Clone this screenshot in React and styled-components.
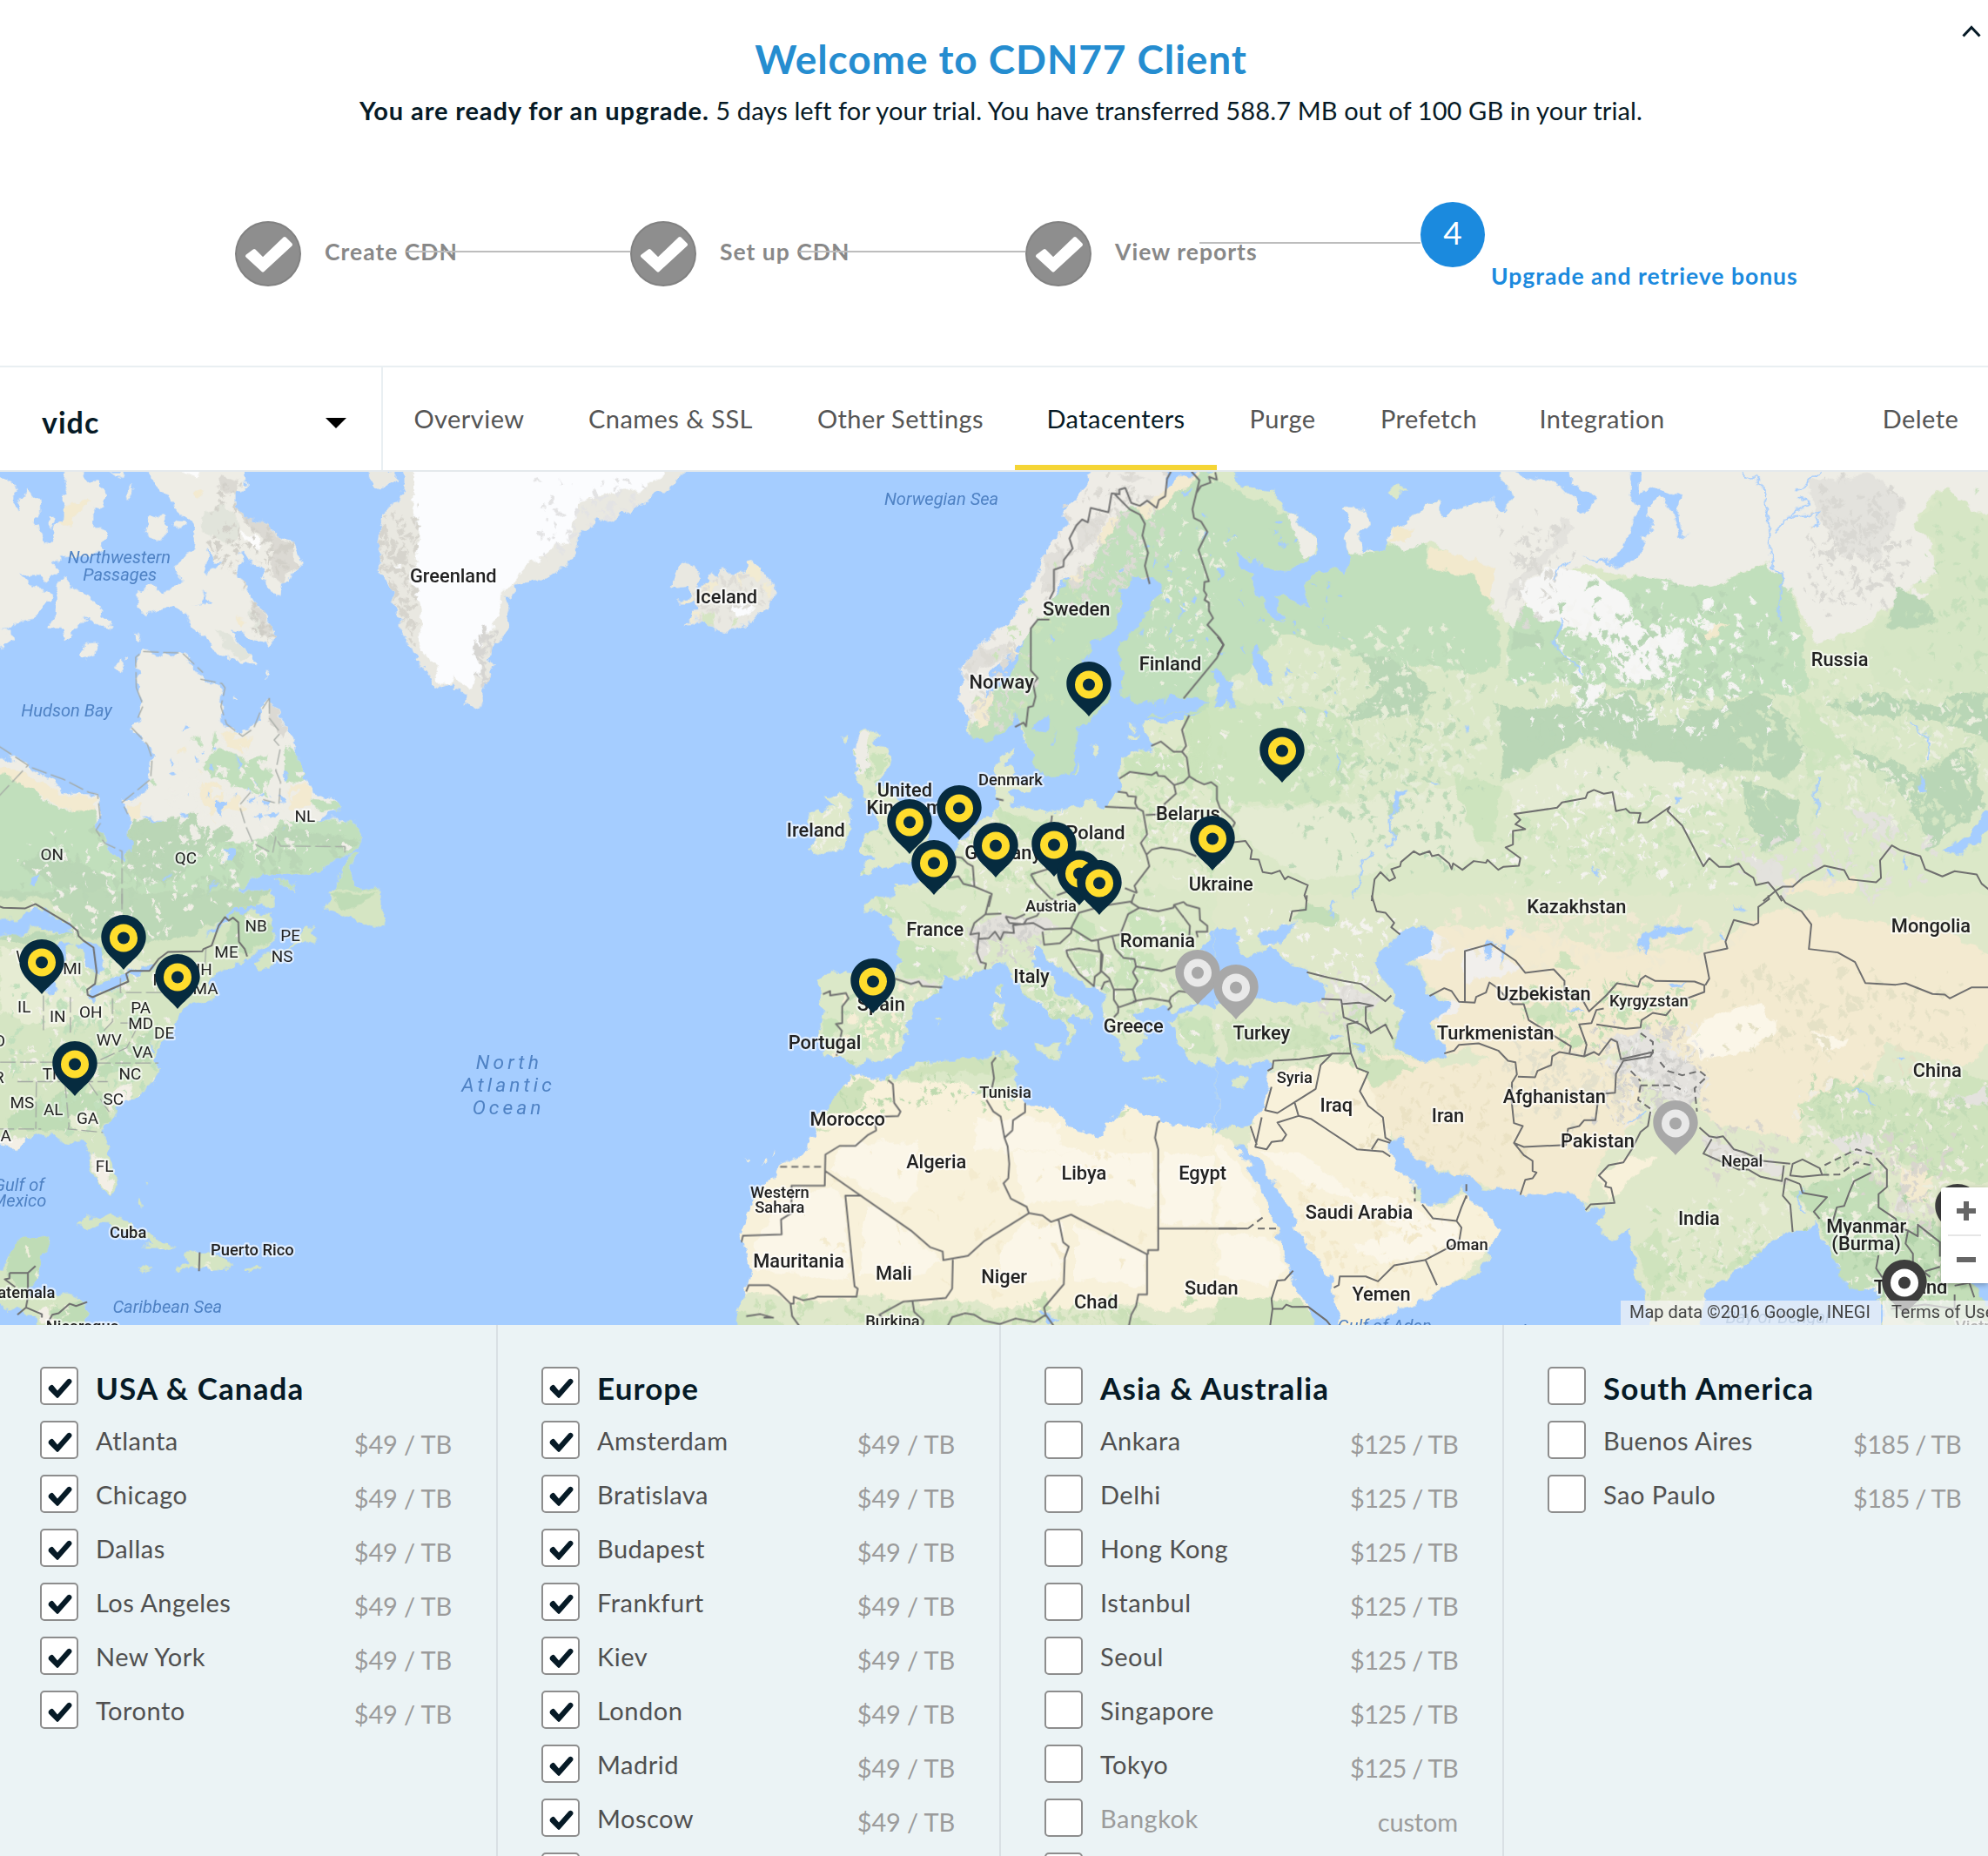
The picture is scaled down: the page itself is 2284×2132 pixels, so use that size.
import React from "react";
import styled, { createGlobalStyle, css } from "styled-components";

const Global = createGlobalStyle`
  * { box-sizing: border-box; }
  html, body { margin: 0; padding: 0; background: #fff; overflow: hidden; }
`;

const Page = styled.div`
  width: 2284px;
  height: 2132px;
  overflow: hidden;
  display: flex;
  flex-direction: column;
  background: #fff;
  color: #061a26;
  font-family: Lato, "Open Sans", sans-serif;
`;

/* ---------- welcome panel ---------- */
const Welcome = styled.header`
  position: relative;
  height: 420px;
  flex: none;
  padding: 39px 0 0 16px;
`;
const Title = styled.h1`
  margin: 0;
  height: 58px;
  line-height: 58px;
  text-align: center;
  font-size: 46px;
  font-weight: 700;
  letter-spacing: 0.9px;
  color: #258dd0;
`;
const Lead = styled.p`
  margin: 9px 0 0;
  height: 42px;
  line-height: 42px;
  text-align: center;
  font-size: 29px;
  white-space: nowrap;
  letter-spacing: 0.13px;
  b { letter-spacing: 0.88px; }
`;
const Collapse = styled.svg`
  position: absolute;
  right: 8px;
  top: 28px;
`;
const Steps = styled.ol`
  list-style: none;
  margin: 84px 0 0;
  padding: 0 0 0 254px;
  display: flex;
`;
const Step = styled.li`
  position: relative;
  width: 454px;
  height: 120px;
  display: flex;
  align-items: flex-start;
  gap: ${(p) => (p.$active ? 7 : 27)}px;
  font-size: 26.5px;
  font-weight: 700;
  letter-spacing: 1px;
  white-space: nowrap;
  color: ${(p) => (p.$active ? "#1b8ade" : "#888")};
`;
const StepDisc = styled.span`
  flex: none;
  width: ${(p) => (p.$active ? 74 : 76)}px;
  height: 75px;
  margin-top: ${(p) => (p.$active ? 0 : 22)}px;
  border-radius: 50%;
  display: flex;
  align-items: center;
  justify-content: center;
  padding-bottom: ${(p) => (p.$active ? 6 : 0)}px;
  font-size: 37px;
  font-weight: 400;
  letter-spacing: 0;
  color: #fff;
  background: ${(p) => (p.$active ? "#1b8ade" : "#8e8e8e")};
  border: ${(p) => (p.$active ? "0" : "2px solid #828282")};
`;
const StepText = styled.span`
  line-height: 32px;
  margin-top: ${(p) => (p.$active ? 69 : 41)}px;
`;
const StepLine = styled.span`
  position: absolute;
  left: ${(p) => p.$from}px;
  right: 0;
  top: ${(p) => p.$top}px;
  height: 2px;
  background: #bdbdbd;
`;

/* ---------- resource bar ---------- */
const Bar = styled.nav`
  flex: none;
  height: 122px;
  display: flex;
  border-top: 2px solid #e9eff2;
  border-bottom: 2px solid #e4e9ec;
`;
const Picker = styled.div`
  width: 440px;
  border-right: 2px solid #e9eff2;
  padding: 6px 40px 0 48px;
  display: flex;
  align-items: center;
  justify-content: space-between;
  font-size: 34px;
  font-weight: 700;
  letter-spacing: 1px;
`;
const Caret = styled.i`
  margin-top: 4px;
  border: 12px solid transparent;
  border-top-color: #000;
  border-bottom: 0;
`;
const Tab = styled.a`
  width: ${(p) => p.$w}px;
  display: flex;
  align-items: center;
  justify-content: center;
  padding-top: 5px;
  font-size: 29px;
  letter-spacing: 0.45px;
  white-space: nowrap;
  color: ${(p) => (p.$active ? "#061a26" : "#555")};
  border-bottom: 6px solid ${(p) => (p.$active ? "#f5d535" : "transparent")};
  ${(p) => p.$end && css`margin-left: auto; margin-right: 35px;`}
`;

/* ---------- map ---------- */
const MapPanel = styled.section`
  position: relative;
  flex: none;
  height: 980px;
  overflow: hidden;
  background: #a5cdff;
`;
const MapSvg = styled.svg`
  display: block;
  width: 2284px;
  height: 980px;
`;
const MapText = styled.text`
  font-family: Roboto, sans-serif;
  text-anchor: middle;
  paint-order: stroke;
  stroke-linejoin: round;
  ${(p) => p.$kind === "country" && css`font-size: 15px; font-weight: 500;`}
  ${(p) => p.$kind === "small" && css`font-size: 12.6px; font-weight: 500;`}
  ${(p) => p.$kind === "state" && css`font-size: 13px; font-weight: 400;`}
  fill: #222;
  stroke: rgba(255, 255, 255, 0.6);
  stroke-width: 3px;
  ${(p) => p.$kind === "water" && css`font-size: 13.8px; font-style: italic; fill: #4f82c4; stroke: none;`}
  ${(p) => p.$kind === "ocean" && css`font-size: 15.6px; font-style: italic; fill: #4f82c4; stroke: none; letter-spacing: 2.8px;`}
`;
const PinSvg = styled.svg`
  position: absolute;
  left: ${(p) => p.$x - 27}px;
  top: ${(p) => p.$y - 542 - 64}px;
`;
const Zoom = styled.div`
  position: absolute;
  right: 0;
  top: 822px;
  width: 54px;
  height: 110px;
  padding: 0 8px;
  border-radius: 3px 0 0 3px;
  background: #fff;
  box-shadow: 0 2px 6px rgba(0, 0, 0, 0.3);
  display: flex;
  flex-direction: column;
`;
const ZoomButton = styled.div`
  flex: 1;
  display: flex;
  align-items: center;
  justify-content: center;
  padding-left: 3px;
  & + & { border-top: 2px solid #e6e6e6; }
`;
const Credits = styled.div`
  position: absolute;
  left: 1862px;
  right: 0;
  bottom: 0;
  height: 28px;
  display: flex;
  gap: 2px;
  overflow: hidden;
  font: 20px/26px Roboto, sans-serif;
  color: #444;
  white-space: nowrap;
`;
const Credit = styled.span`
  padding: 0 ${(p) => (p.$last ? 0 : 12)}px 0 10px;
  flex: ${(p) => (p.$last ? "1 0 auto" : "none")};
  background: rgba(245, 245, 245, 0.7);
`;

/* ---------- datacenter lists ---------- */
const Regions = styled.section`
  flex: none;
  height: 610px;
  display: grid;
  grid-template-columns: 572px 578px 578px 556px;
  background: #ebf3f5;
`;
const Region = styled.div`
  padding: 48px 51px 0 ${(p) => (p.$first ? 46 : 50)}px;
  border-right: 2px solid #d9e0e4;
  &:last-child { border-right: 0; padding-right: 31px; }
`;
const Row = styled.label`
  height: 62px;
  display: flex;
  align-items: flex-start;
  gap: 20px;
  white-space: nowrap;
`;
const Box = styled.span`
  flex: none;
  width: 44px;
  height: 44px;
  border: 2px solid #8d8d8d;
  border-radius: 5px;
  background: #fff;
  padding: 9px 6px;
  line-height: 0;
`;
const Place = styled.span`
  flex: 1;
  line-height: 44px;
  padding-top: ${(p) => (p.$head ? 2 : 1)}px;
  font-size: ${(p) => (p.$head ? 35 : 29)}px;
  font-weight: ${(p) => (p.$head ? 700 : 400)};
  letter-spacing: ${(p) => (p.$head ? 1.1 : 0.5)}px;
  color: ${(p) => (p.$head ? "#061a26" : p.$dim ? "#9b9b9b" : "#505050")};
`;
const Price = styled.span`
  line-height: 44px;
  padding-top: 5px;
  font-size: 29px;
  letter-spacing: ${(p) => (p.$tight ? -0.7 : -0.15)}px;
  color: #9b9b9b;
`;

/* Map sheets: origin and scale of the coordinates in which each sheet's outlines are given. */
const SY = 0.2289;
const SHEETS = {
  A: [0, 367.3, 0.25, SY],
  B: [0, 707.2, 0.25, SY],
  C: [583.5, 367.3, 0.25, SY],
  D: [583.5, 707.2, 0.25, SY],
  E: [961.1, 367.3, 0.38705, SY],
  F: [961.1, 707.2, 0.38705, SY],
  G: [260.9, 367.3, 0.24523, SY],
};
const place = (k) => {
  const [x, y, a, b] = SHEETS[k];
  return `translate(${x} ${y}) scale(${a} ${b})`;
};

const LAND = [
  ["A", "M-20,40L20,45 50,70 50,120 60,160 75,100 90,80 125,120 128,170 110,180 125,220 150,262 165,250 170,215 195,190 200,120 215,100 200,60 205,0 250,0 260,40 320,60 332,90 330,150 300,150 300,190 332,240 325,285 280,310 230,320 190,325 165,330 188,360 160,390 125,378 60,380 90,415 130,425 155,435 150,470 120,525 60,535 40,560 -20,565ZM-20,555L30,570 38,600 20,620 -20,625ZM205,380L225,420 260,440 318,490 325,525 362,548 345,573 295,550 270,520 240,560 205,600 195,560 150,560 175,520 175,460 185,400ZM450,0L760,0 780,80 740,90 740,140 800,190 850,200 875,250 930,270 955,320 930,350 915,400 890,405 885,455 850,420 820,350 780,320 740,300 765,330 745,380 770,400 800,460 835,500 858,560 850,620 800,600 760,570 725,555 760,620 790,650 808,690 760,680 700,650 650,610 630,580 590,520 560,510 540,490 500,500 470,512 432,495 432,440 460,420 530,430 560,410 575,390 553,350 580,310 610,290 615,250 595,180 560,150 530,110 500,100 480,60 470,30ZM470,180L500,165 525,175 527,230 505,262 470,262 458,230ZM540,190L578,195 575,215 540,210ZM425,65L415,105 395,110ZM250,650L270,615 312,612 300,645 260,668ZM365,680L380,655 395,665 392,690 378,712ZM420,572L448,585 435,600ZM155,175L170,170 172,205 160,215ZM340,20L390,20 385,45ZM830,710L852,712 845,726ZM740,785L750,800 738,808Z"],
  ["A", "M430,660L450,640 500,655 550,665 575,648 610,690 640,740 690,755 705,770 695,830 695,880 725,900 765,930 800,900 820,870 830,820 850,798 865,830 890,880 910,930 935,970 930,1000 955,1030 950,1080 985,1100 990,1130 1050,1150 1080,1165 1060,1190 1000,1225 1080,1215 1120,1235 1132,1280 1130,1310 1100,1340 1050,1355 1000,1405 950,1415 880,1405 800,1410 770,1440 740,1480 700,1520 -20,1520 -20,1010 40,1005 90,1028 150,1080 210,1125 300,1130 318,1165 315,1230 303,1255 325,1295 360,1330 385,1355 410,1335 415,1290 408,1250 405,1200 383,1160 440,1130 475,1080 480,1000 460,950 415,902 440,870 450,820 435,770 440,720ZM1135,1335L1110,1380 1100,1420 1130,1445 1150,1460 1195,1455 1200,1520 1030,1520 1060,1450 1080,1380 1100,1345ZM740,1520L790,1475 850,1465 865,1500 860,1520ZM860,1425L930,1445 940,1470 880,1440Z"],
  ["G", "M230,0L1150,0 1125,40 1085,70 1040,110 1000,140 940,165 890,190 850,180 840,205 805,225 790,280 765,330 720,360 690,400 650,400 620,405 590,410 590,440 560,455 578,490 570,520 570,560 550,600 520,625 510,660 520,690 505,740 490,770 492,820 465,838 430,820 430,785 395,770 400,745 365,755 330,770 320,730 300,700 265,650 240,590 225,560 222,520 205,510 200,430 170,400 160,350 160,300 150,270 158,210 165,180 180,140 230,125 240,90 232,60ZM115,10L210,10 210,50 160,78 120,45ZM1087,410L1110,375 1135,335 1155,340 1185,385 1180,430 1215,400 1215,360 1245,385 1262,355 1300,385 1320,355 1340,365 1340,330 1360,330 1385,350 1400,390 1430,410 1432,440 1400,490 1330,545 1300,560 1268,578 1225,560 1190,535 1142,542 1180,500 1165,470 1106,468 1155,455 1150,410 1110,415Z"],
  ["B", "M-20,-20L865,-20 865,10 800,40 740,40 690,90 640,140 690,110 740,60 800,50 850,60 860,120 870,150 830,180 780,215 720,245 690,260 650,300 685,350 600,375 560,400 550,440 520,490 500,540 485,570 505,600 480,650 440,680 400,700 350,760 330,800 325,840 350,920 370,960 368,1010 345,1025 310,990 290,930 290,880 265,840 215,850 170,820 130,825 80,830 60,870 -20,850ZM805,230L840,190 900,185 960,130 985,95 980,130 1000,140 960,165 900,180 860,225 820,260ZM1025,-20L1200,-20 1200,30 1225,70 1215,105 1170,95 1120,80 1070,55 1020,55 1040,10ZM240,1130L270,1105 330,1100 400,1115 450,1160 500,1180 550,1210 500,1220 450,1218 470,1195 420,1160 340,1130 260,1135ZM585,1225L650,1222 700,1240 735,1270 700,1278 650,1285 620,1280 555,1280 550,1270 600,1265ZM430,1275L485,1285 460,1293ZM775,1275L820,1278 810,1288 775,1288ZM430,1030L445,1050 448,1075 435,1060ZM455,980L462,985 457,1000ZM-20,1270L20,1280 30,1240 50,1180 100,1168 158,1162 155,1190 130,1240 125,1290 100,1330 90,1370 160,1375 210,1365 245,1375 272,1400 265,1540 130,1540 100,1450 60,1430 0,1400 -20,1390Z"],
  ["C", "M1120,0L1568,0 1568,1540 460,1540 500,1480 490,1445 550,1440 600,1400 660,1350 700,1290 740,1230 780,1210 820,1180 810,1110 800,1060 810,1020 865,980 845,1030 870,1040 860,1080 895,1090 925,1110 905,1130 880,1110 850,1130 870,1170 920,1180 970,1205 1020,1190 1090,1155 1150,1170 1170,1150 1200,1110 1200,1080 1200,1010 1240,980 1290,990 1310,960 1275,900 1290,860 1400,850 1480,815 1450,800 1400,790 1320,815 1250,820 1205,790 1210,700 1200,650 1205,600 1240,570 1280,520 1300,480 1332,430 1310,390 1240,385 1200,440 1210,500 1180,570 1110,620 1080,680 1150,720 1165,800 1130,840 1110,880 1065,900 1060,1000 1040,1070 970,1075 930,1030 905,960 880,890 870,860 840,910 790,950 740,945 715,910 720,860 695,800 700,680 750,640 790,580 850,540 900,470 880,460 935,400 950,300 990,260 1035,200 1020,165 945,200 1000,130 1070,95 1085,60ZM375,920L440,915 420,960 475,975 480,1010 440,1080 430,1100 470,1110 530,1200 590,1260 585,1310 560,1330 540,1370 430,1390 370,1420 400,1370 430,1350 385,1330 400,1270 440,1250 420,1180 380,1150 390,1100 350,1060 370,1040 360,980ZM275,1140L310,1130 350,1140 365,1170 345,1200 350,1260 330,1310 240,1340 220,1310 250,1270 225,1240 230,1190 290,1180ZM320,940L345,930 335,960ZM310,665L330,660 325,685ZM490,785L502,800 500,820ZM1105,970L1130,965 1120,1010 1108,1000ZM1070,1005L1062,1055 1052,1055ZM1225,925L1260,925 1235,942ZM1230,895L1255,895 1240,910Z"],
  ["D", "M390,20L420,5 480,0 540,-20 1568,-20 1568,110 1530,110 1490,120 1480,150 1465,180 1460,250 1450,340 1450,365 1360,395 1330,380 1280,380 1270,400 1230,400 1260,430 1290,500 1250,510 1260,560 1220,560 1200,520 1195,490 1160,450 1150,420 1145,350 1120,310 1080,300 1040,270 1000,240 960,185 925,165 920,200 935,240 980,280 1000,320 1050,350 1110,410 1105,430 1050,400 1040,430 1070,460 1045,500 1030,510 1040,470 1010,430 950,370 900,340 860,270 820,230 780,240 720,280 650,270 635,320 560,370 530,430 540,470 500,525 470,560 400,565 370,590 340,570 310,548 260,548 262,500 245,470 265,400 250,285 290,255 420,265 490,275 505,230 505,150 470,100 460,60 400,45ZM1375,410L1450,375 1520,400 1568,375 1568,590 1540,575 1470,585 1430,560 1400,530 1375,500 1360,430ZM930,510L1015,505 1010,560 985,560 930,520ZM800,375L840,375 838,440 810,465 795,390ZM815,305L830,300 828,350 810,340ZM1280,620L1355,630 1340,638 1285,632ZM615,430L640,435 628,448Z"],
  ["D", "M370,600L400,625 440,630 490,625 550,580 650,560 780,555 840,540 860,545 882,560 865,590 880,630 855,680 900,715 950,715 1010,745 1030,790 1080,800 1135,830 1160,810 1165,760 1220,725 1260,745 1320,770 1400,790 1450,805 1500,780 1580,800 1580,1540 -10,1540 0,1420 20,1360 35,1290 5,1160 30,1080 60,1010 120,960 130,920 200,890 235,830 235,770 330,660 345,610ZM10,905L30,905 20,920ZM75,905L85,915 72,920ZM105,880L115,878 105,900Z"],
  ["E", "M-5,45L50,80 110,90 140,160 200,240 205,290 180,330 140,360 80,340 40,290 20,300 70,380 75,440 110,520 135,545 110,450 140,455 185,490 175,420 200,370 230,345 262,365 270,310 255,260 265,180 250,140 300,150 310,210 285,230 290,290 335,295 345,240 410,160 450,115 460,170 500,140 565,110 575,160 600,110 575,40 575,0 1610,0 1610,1520 -5,1520ZM345,90L365,58 385,80 360,125Z"],
  ["F", "M-5,-5H1610V1540H-5Z"],
];

const AREAS = [
  ["A", "#eeede6", "M-30,0H1300V1530H-30Z"],
  ["A", "#c1dfbc", "M-20,1060L60,1080 130,1150 200,1190 300,1170 310,1250 385,1350 415,1250 460,1225 600,1235 650,1290 780,1300 870,1280 870,1230 1000,1220 1140,1220 1220,1300 1220,1530 -20,1530ZM640,1010L700,980 740,1000 790,1010 840,990 850,1080 840,1130 780,1120 720,1090 650,1060ZM900,960L960,1010 960,1090 900,1090ZM980,1150L1090,1160 1060,1190 990,1190ZM605,935L630,930 630,955 605,950ZM680,905L690,960 670,990ZM470,1090L490,1080 490,1105Z"],
  ["A", "#bad6b6", "M415,1240L480,1220 620,1200 640,1270 680,1290 640,1330 590,1400 480,1440 400,1400 400,1300ZM870,1240L1130,1290 1100,1320 890,1290ZM130,1330L280,1370 350,1450 280,1480 180,1450 60,1380Z"],
  ["A", "#f3ead0", "M630,1050L690,1100 710,1170 740,1130 780,1180 720,1180 680,1230 640,1170ZM910,1100L985,1100 980,1180 910,1180ZM-20,1030L60,1050 140,1090 200,1130 300,1140 295,1180 200,1185 140,1150 60,1090 -20,1060ZM700,920L740,905 740,940 800,940 760,990 720,970ZM400,1170L450,1160 440,1220 410,1230ZM550,990L590,970 590,985 560,998ZM195,150L240,120 280,115 260,145 215,210 190,200ZM740,520L780,530 770,560ZM610,90L640,80 630,120Z"],
  ["A", "#e1e4db", "M650,160L700,130 740,160 760,230 720,270 640,230ZM690,560L740,600 790,650 760,670 700,620ZM790,500L820,540 840,580 800,570Z"],
  ["A", "#dbd9d3", "M690,30L760,50 740,100 700,90ZM740,140L800,180 850,200 870,250 930,290 930,350 890,405 850,370 870,290 800,220ZM790,460L830,500 855,560 845,600 810,530ZM850,800L905,920 890,945 850,880Z"],
  ["A", "#fcfcfc", "M760,235L810,240 830,280 820,300 790,270ZM560,15L630,20 620,45Z"],
  ["G", "#e9e8e1", "M0,0H1500V900H0Z"],
  ["G", "#fbfcfe", "M268,0L1090,0 1060,50 1000,80 930,90 870,100 800,130 780,200 770,260 700,300 640,340 590,400 550,440 545,490 520,560 490,600 475,660 480,720 455,770 430,750 400,720 385,745 345,745 330,690 290,640 285,560 290,500 270,440 260,400 285,330 280,240 262,170 268,100ZM1290,480L1340,460 1370,500 1310,530ZM190,345L225,340 200,370Z"],
  ["G", "#f2ebd2", "M1200,400L1240,400 1230,450 1190,470ZM1340,330L1390,350 1380,400 1340,385ZM1110,458L1170,460 1165,475ZM1390,410L1425,410 1410,450ZM1145,535L1180,515 1190,530ZM1310,370L1330,360 1320,420Z"],
  ["G", "#d5e5c3", "M1190,515L1225,510 1230,560 1195,540ZM1285,535L1310,535 1280,560Z"],
  ["B", "#d5e5c3", "M-30,-20H1300V1540H-30Z"],
  ["B", "#bcd8b7", "M-20,-20L865,-20 780,60 760,100 700,80 600,130 450,160 230,130 220,60 130,0 -20,10ZM-20,130L230,120 200,150 60,160Z"],
  ["B", "#bfdcb6", "M300,600L480,450 480,560 330,620ZM20,760L250,650 330,690 350,760 320,800 20,810ZM740,50L860,100 860,150 780,200 700,200ZM30,1180L160,1160 120,1300 80,1380 30,1300ZM170,1420L270,1390 270,1540 190,1540ZM1030,-10L1190,-10 1100,40Z"],
  ["B", "#e6ecd3", "M0,180L130,200 350,350 350,440 140,450 0,400ZM310,200L490,230 400,260 310,290ZM210,760L300,740 320,800 230,800Z"],
  ["B", "#f3efe6", "M350,690L400,640 420,690 350,740ZM290,880L320,900 360,980 350,1020 310,980ZM-20,830L80,835 60,870 -20,850ZM110,1420L160,1420 170,1470 120,1470Z"],
  ["C", "#dfe9cb", "M200,880H1580V1540H200Z"],
  ["C", "#c1dfbc", "M880,580L1000,450 1130,280 1200,130 1300,150 1450,30 1600,0 1600,830 1400,850 1100,900 1050,1085 960,1085 930,1050 880,860 800,960 700,960 780,800 870,700 900,600Z"],
  ["C", "#eeece6", "M1100,0L1350,0 1330,140 1200,150 1170,220 1110,330 1020,400 980,480 930,560 870,640 800,700 780,780 740,900 690,850 690,650 850,500 930,380 1000,200ZM340,940L410,920 400,1060 360,1070Z"],
  ["C", "#e1dfda", "M960,300L1030,280 1000,400 950,440ZM1050,210L1150,160 1130,260 1070,300ZM710,660L840,610 840,660 720,720ZM1200,30L1290,40 1220,70Z"],
  ["C", "#f3ead0", "M1250,150L1400,30 1450,30 1340,140 1280,180ZM1160,170L1200,180 1160,260 1130,260ZM740,820L800,780 790,860 750,920ZM840,630L890,640 860,670ZM1040,380L1110,340 1050,420Z"],
  ["C", "#cbe3bb", "M1400,860L1600,800 1600,1230 1500,1110 1420,1070ZM1200,1000L1400,1000 1410,1070 1230,1060ZM410,1000L470,990 430,1070ZM650,1420L730,1430 720,1520 600,1520ZM800,1190L980,1220 920,1280 820,1260ZM920,1320L1100,1330 1000,1400ZM490,1450L540,1460 520,1500Z"],
  ["D", "#dbe8c8", "M0,-30H1600V700H0Z"],
  ["D", "#cae3bb", "M500,150L680,190 700,260 620,290 510,270ZM410,-10L480,30 520,90 470,80ZM560,20L700,60 640,90ZM400,420L520,400 500,500 380,540 330,480ZM260,420L310,430 290,520 260,500ZM1050,40L1130,130 1060,160ZM1030,180L1130,200 1100,290ZM1200,160L1330,220 1280,330 1180,300ZM880,220L1000,330 950,370ZM1380,420L1550,420 1540,560 1430,540ZM1220,40L1370,90 1430,130 1240,130Z"],
  ["D", "#e2e0db", "M730,110L830,60 950,80 1010,100 900,150 840,130 790,150 760,240 740,200ZM500,270L640,310 560,310Z"],
  ["D", "#f8f1da", "M350,600L420,600 500,640 700,640 800,690 860,690 1600,700 1600,1540 -20,1540 -20,800 230,750Z"],
  ["D", "#cfe2bb", "M500,620L650,560 800,555 800,620 640,600 560,640ZM290,680L380,620 430,650 360,740 260,760ZM800,560L880,560 870,630 810,640ZM1480,790L1540,785 1515,830ZM930,730L965,735 940,745ZM1170,745L1240,730 1200,755ZM235,800L290,800 240,815Z"],
  ["D", "#fbf6e8", "M740,760L910,765 1010,790 1005,850 1070,870 1060,880 740,875ZM860,880L1300,880 1310,1060 900,1050ZM330,850L560,840 560,1010 500,1060 400,1000 290,940ZM150,1010L290,1000 330,1040 350,1320 50,1290 40,1200ZM400,1050L560,1180 640,1260 560,1300 380,1300ZM900,1110L1010,1130 1030,1210 1000,1320 830,1340 820,1240ZM1060,1120L1280,1230 1280,1340 1060,1320ZM1330,880L1560,900 1560,1130 1330,1130Z"],
  ["D", "#dfe8ca", "M-20,1370L130,1370 180,1410 400,1370 560,1400 660,1390 950,1430 1250,1400 1330,1430 1580,1410 1580,1540 -20,1540Z"],
  ["D", "#cfe2bc", "M-20,1430L100,1440 160,1500 150,1540 -20,1540ZM560,1430L680,1440 860,1480 840,1540 560,1540ZM1180,1440L1330,1480 1320,1540 1180,1540Z"],
  ["E", "#dbe8c8", "M-20,0H1610V1540H-20Z"],
  ["E", "#c1dfbc", "M-20,40L150,170 200,330 270,290 420,260 430,350 520,380 550,470 570,560 570,700 500,720 400,680 300,680 270,640 130,580 60,700 -20,760ZM590,500L850,380 1000,420 1140,320 1190,560 1200,780 1000,800 900,770 720,750 590,750Z"],
  ["E", "#cde4be", "M-20,800L250,850 300,1000 240,1160 -20,1160ZM480,1060L580,1100 560,1300 500,1280ZM1180,780L1300,1000 1200,1080Z"],
  ["E", "#eeede6", "M330,240L410,160 560,0 1610,0 1610,160 1540,160 1480,80 1420,160 1470,360 1400,430 1330,540 1220,620 1170,450 1120,330 1000,420 850,380 750,350 650,400 600,560 560,480 520,350 430,260 380,300ZM140,160L205,250 190,330 160,260ZM240,130L310,150 320,300 250,290ZM1410,420L1450,440 1410,500Z"],
  ["E", "#d6e6c5", "M1420,200L1480,80 1540,160 1610,250 1610,790 1350,760 1300,640 1330,560 1400,480 1470,420 1460,270Z"],
  ["E", "#b9d6b6", "M570,830L700,830 850,780 900,900 980,850 1100,780 1180,900 1200,1000 1150,1080 1100,1050 900,1050 860,990 740,940 640,1030 580,1080ZM280,640L380,680 440,780 390,860 250,880 330,760ZM1240,820L1340,780 1470,830 1500,780 1610,780 1610,960 1568,950 1500,900 1400,860 1300,860ZM1290,960L1420,1060 1540,960 1560,1180 1500,1240 1450,1330 1400,1140 1310,1020ZM600,570L670,590 660,620 600,630ZM1380,420L1440,460 1460,540 1360,560ZM1070,1080L1180,1150 1180,1280 1110,1330 1070,1180Z"],
  ["E", "#f6f6f5", "M610,430L670,350 760,380 830,450 850,560 950,570 950,620 910,700 890,750 820,740 790,620 740,570 650,530ZM720,750L790,760 770,820 730,820ZM980,480L1010,450 1000,500Z"],
  ["E", "#e4ebd2", "M580,1100L740,960 880,1010 1050,1080 1060,1150 930,1180 800,1180 600,1190ZM20,1170L240,1170 480,1100 540,1350 470,1380 400,1330 320,1400 180,1430 50,1290Z"],
  ["E", "#f2e9cd", "M980,620L1000,550 1040,545 1010,590ZM430,280L530,330 570,350 545,460 520,380 430,350ZM360,220L400,220 380,260 345,260ZM1150,1430L1300,1430 1290,1520 1150,1500Z"],
  ["E", "#e3e2dd", "M1200,60L1330,20 1400,130 1340,330 1270,300 1220,170ZM700,170L720,180 715,260 660,340 620,420 575,500 600,400 680,280ZM1280,1170L1340,1190 1400,1260 1360,1280 1310,1230ZM1070,1350L1150,1370 1160,1460 1100,1430Z"],
  ["F", "#dfe8ca", "M-10,-10H1610V1540H-10Z"],
  ["F", "#f3ead0", "M390,180L450,100 620,110 800,180 990,190 1060,100 1140,40 1240,60 1400,100 1420,60 1610,240 1610,450 1520,590 1360,500 1330,640 1200,700 1180,840 1000,780 950,620 860,540 740,550 600,610 500,520 460,550 440,420 500,380 440,330ZM280,560L340,540 450,580 600,560 860,560 860,760 780,900 750,1060 600,1040 500,960 400,920 300,720ZM1390,930L1460,940 1440,1060 1390,1030Z"],
  ["F", "#f8f1da", "M110,600L290,560 350,840 400,1000 450,1080 500,1020 590,1150 440,1400 250,1500 90,960 60,880 80,640ZM-10,790L60,900 130,1100 260,1540 -10,1540ZM770,960L850,890 900,900 830,980 800,1060Z"],
  ["F", "#fbf6e8", "M950,500L1000,410 1110,370 1140,450 1070,540 980,560ZM80,880L160,880 280,1020 380,1050 430,1110 490,1130 480,1200 420,1240 330,1260 270,1200 370,1160 290,1060 170,980ZM1210,460L1290,500 1230,540ZM0,850L50,930 90,1110 0,1130ZM0,1160L110,1180 140,1280 100,1340 0,1300Z"],
  ["F", "#f1efec", "M500,180L560,170 620,240 580,270 500,300ZM440,110L480,180 450,220 390,210ZM455,360L500,360 490,410 450,420Z"],
  ["F", "#cfe3bd", "M620,380L700,370 720,440 660,440ZM280,560L340,560 400,590 320,660ZM1280,640L1480,700 1500,600 1610,640 1610,1000 1450,960 1350,860 1260,840 1180,720ZM850,1200L900,1150 920,1300 890,1400ZM1000,1290L1100,1210 1060,1290ZM10,420L200,450 250,510 20,560ZM700,190L740,250 690,240ZM-10,1380L160,1390 230,1500 -10,1540Z"],
  ["F", "#c3deb8", "M1160,1010L1290,960 1330,900 1370,1100 1460,1130 1610,1200 1610,1540 1360,1440 1340,1330 1280,1370 1220,1100ZM180,20L250,60 240,100 150,80Z"],
  ["F", "#e4e2de", "M790,480L880,460 960,580 1000,620 950,760 880,640 800,600 830,560ZM1240,830L1330,820 1350,900 1270,880ZM220,290L330,350 320,390 260,380ZM980,820L1150,930 1140,970 1000,880ZM1390,980L1420,1100 1380,1080ZM1480,700L1600,640 1600,700 1510,730Z"],
];

const WATER = [
  ["A", "M650,285L670,320 700,330 680,350 655,370 645,350ZM635,420L668,475 610,485 650,475ZM680,1160L715,1160 700,1205 680,1190ZM830,1200L885,1190 860,1210ZM95,1410L125,1415 115,1455 90,1445ZM710,1330L740,1330 730,1365 715,1360ZM535,1060L560,1070 545,1080ZM660,1440L680,1440 660,1465ZM510,1430L540,1400 520,1435ZM450,1215L520,1210 470,1225Z"],
  ["B", "M-20,75L50,75 110,40 150,60 220,95 225,120 100,110 60,130 -20,125ZM150,180L230,160 200,200 185,260 170,330 140,345 135,250ZM240,155L300,160 330,210 315,270 290,240 260,190ZM270,340L300,310 400,265 400,295 330,330 290,350ZM400,255L490,235 470,265 410,272ZM480,490L495,540 480,530Z"],
  ["C", "M1490,705L1540,740 1568,780 1568,830 1520,810 1500,760ZM930,880L975,870 975,900 945,925 930,915ZM1002,905L990,960 984,960ZM1395,90L1425,80 1410,110ZM1500,360L1530,370 1510,400ZM1375,480L1400,510 1385,515ZM975,580L995,610 985,615Z"],
  ["D", "M945,1425L980,1440 1005,1460 985,1470 960,1445ZM725,665L745,665 728,680Z"],
  ["E", "M600,-10L720,-10 725,60 765,110 752,170 700,80 640,40 600,25ZM840,-10L858,-10 858,100 880,80 910,85 940,110 935,160 945,225 960,235 940,240 925,150 900,110 875,150 880,220 860,280 830,345 800,340 740,315 790,325 825,290 835,220 855,150 838,90ZM-5,700L30,750 35,790 5,830 -5,830ZM75,620L90,640 100,690 105,750 90,755 70,680ZM1610,1170L1568,1180 1530,1270 1470,1335 1510,1340 1568,1260 1610,1200ZM1400,1340L1406,1390 1396,1390ZM1235,1390L1255,1405 1245,1420ZM925,1145L945,1140 935,1160ZM1430,1070L1440,1120 1425,1100ZM360,1120L385,1118 360,1200ZM430,1085L450,1090 435,1095ZM125,805L138,810 128,820ZM500,885L512,890 505,920ZM760,1390L770,1395 765,1410Z"],
  ["F", "M345,840L375,835 400,900 450,950 500,960 515,955 530,1000 615,1025 715,1015 735,1050 750,1080 790,1070 780,1100 765,1130 800,1185 835,1150 850,1290 870,1400 895,1540 225,1540 245,1490 300,1470 440,1370 530,1290 550,1230 578,1140 540,1080 510,1040 500,1000 460,1060 410,1055 400,1000 360,930 345,870ZM975,1540L990,1370 1050,1300 1130,1190 1170,1150 1200,1150 1220,1120 1230,1180 1270,1280 1280,1360 1330,1340 1350,1400 1360,1540ZM25,850L50,850 70,900 110,970 150,1100 200,1250 235,1340 250,1540 225,1540 160,1350 130,1200 110,1100 80,1000 60,920ZM-5,555L60,580 95,560 105,600 100,650 85,740 60,790 0,800 -5,800ZM-5,110L30,115 50,130 35,170 60,200 105,175 130,210 180,260 215,300 215,350 180,375 120,370 80,345 30,350 -5,375ZM75,130L160,85 130,160 80,175ZM315,210L370,130 400,95 440,120 435,190 385,220 420,280 430,340 475,370 450,410 437,430 440,490 460,500 460,555 420,570 370,530 358,480 380,400 350,330 325,270ZM855,180L865,130 890,105 970,105 960,125 885,130 875,195ZM545,150L565,160 552,220ZM570,165L582,170 578,225 572,210ZM585,110L608,120 590,150ZM915,305L950,297 930,322ZM1385,545L1405,560 1395,570ZM1015,120L1030,150 1020,150ZM275,500L295,520 288,545ZM230,470L245,480 235,490ZM1520,1320L1610,1330 1610,1400 1570,1420 1545,1360ZM1050,30L1080,50 1070,55ZM700,378L735,378 745,395Z"],
];

const RIVERS = [
  ["E", "M1060,15L1075,45 1095,30 1110,60 1118,180 1122,310 1140,360 1150,420 1140,540M1225,20L1195,70 1175,80M1180,110L1200,130 1150,190 1135,230M1160,175L1230,160 1210,210M715,320L690,380M697,520L685,610 740,710M385,1118L360,1160 350,1230 355,1300 340,1310M310,1330L290,1400 275,1490M1410,890L1450,930 1445,1010M1220,1080L1218,1210M160,840L175,860M247,990L243,1050"],
  ["F", "M1183,1000L1183,1080 1200,1090M1295,660L1340,720M240,20L228,70M870,740L830,780"],
];

const BORDERS = [
  ["B", "M-10,30L10,38 80,40 112,25 220,95 245,118 248,135 262,150 295,175 305,260 300,300 275,320 277,338 292,346 405,292 398,265 412,255 472,255 500,215 530,190 638,188 642,180 668,168 690,100 710,70 722,82 735,72 752,88 754,155 772,180 780,206M630,1225L628,1290M30,1296H88M88,1380V1296L112,1272M30,1296L30,1315 15,1318 48,1345M88,1380L82,1415 55,1440M82,1415L132,1438V1450M150,1470L165,1440 185,1435 220,1402 240,1410 275,1396"],
  ["C", "M868,900L895,885 903,898 910,832 925,828 933,795 925,750 940,732 918,705 918,560 940,530 977,530M977,460L991,430 991,358 1021,347 1022,325 1050,285 1040,250 1062,205 1080,185 1098,195 1107,145 1163,160 1173,95 1198,98 1197,82 1216,76 1235,128 1262,138 1285,120 1315,145 1322,118 1342,105 1348,45 1360,20M1180,95L1230,150 1262,168 1278,200 1270,240 1288,300 1278,345 1293,408M1425,20L1450,50 1438,105 1428,150 1433,180 1455,192 1475,228 1447,290 1480,398 1466,400 1464,430 1473,445 1466,462 1480,472 1480,500 1493,525 1475,548 1515,595 1526,617 1505,662 1400,802M1440,95L1455,70 1485,58 1480,38 1505,48 1500,22M1418,860L1395,910 1408,965 1395,985 1368,985 1328,950 1298,965M1395,985L1410,1005 1418,1070 1400,1090 1370,1100 1340,1070 1320,1068 1315,1055 1300,1065 1230,1055 1197,1078M1418,1070L1440,1085 1465,1098 1487,1090 1505,1105 1505,1150 1515,1180 1535,1200 1550,1215 1562,1230 1555,1245M1370,1100L1376,1130 1340,1165 1335,1200 1280,1203M1192,1123L1220,1127 1225,1138 1250,1140 1247,1162 1255,1180 1272,1190 1285,1270 1265,1300 1283,1340 1292,1380 1245,1447 1253,1472M1152,1175L1250,1180M1283,1340L1300,1322 1330,1315 1390,1325 1440,1345M660,1345L700,1350 718,1370 735,1380 740,1450 795,1475 785,1520M655,1420L690,1415 705,1440 740,1450M918,1408L935,1440 980,1490 1000,1500M1100,1440L1000,1480M918,1408L985,1385M1215,1455L1253,1472M985,1205L982,1230M808,1147L832,1153"],
  ["D", "M790,-5L775,60 740,90 727,130 755,125 748,190 760,225 777,230 773,250M755,145L785,143 805,120 822,148 832,122 865,125 862,98 925,90 962,112 1045,108 1070,55 1150,30 1240,15M775,60L825,58M838,68L850,90 895,95 905,78 938,65 970,10M838,68L870,75 900,60M955,120L960,165 1010,160 1045,125 1048,105M1045,108L1110,152 1130,148 1175,135 1200,130M1200,130L1225,60 1260,38 1320,50 1368,38 1370,28 1400,18 1410,28 1450,40 1452,80 1475,100 1475,120 1440,120 1445,140M1370,28L1420,100 1418,135M1245,-10L1235,20 1260,38M1030,185L1070,178 1140,190 1138,260 1120,275 1117,308 1070,265 1035,205ZM1130,148L1133,180 1145,200 1140,255 1165,280 1180,320 1180,355 1195,380 1193,400 1180,415M1175,135L1185,180 1210,210 1245,215 1250,240 1330,255 1375,240 1400,235M1250,240L1240,260 1255,290 1240,320 1250,360 1190,383M1180,320L1215,320 1240,318M1240,360L1295,350 1355,360 1360,345 1385,325 1420,330M1355,360L1362,378 1350,390M1140,320L1150,295 1165,290M490,282L540,300 565,292 575,308 638,312M262,336L285,325 285,340 335,332 343,350 323,378 323,435 303,438 322,462 305,548M468,632L483,645 487,710 507,740 500,755 425,758 430,805 405,820 365,858 315,858 270,888 268,995 163,995 163,1090 130,1112 132,1163 10,1168 5,1190M270,945L540,1150 600,1207 640,1222 642,1252 720,1237 770,1187 912,1090 905,1068 855,1040 832,987 847,970 850,920 845,860 835,830 823,757 800,740 778,700M835,830L860,805 862,770 900,742 900,710M808,553L795,572 802,625 795,660M912,1090L955,1098 982,1120 1045,1095 1285,1232V1370H1257L1250,1410 1235,1440 1225,1490M1325,772L1318,780 1310,830 1320,870V1217H1288V1232M1320,1143H1568M1005,1108L1020,1190 1038,1205 1025,1245 1022,1335 960,1415 965,1440 930,1465 870,1453 820,1472 770,1460 740,1440 710,1435 670,1448 655,1480M672,1250L670,1350 650,1382 515,1395 440,1440 450,1450M545,1395L550,1430 580,1460 575,1480M385,1030H333L362,1342 372,1350 368,1378H245L235,1383 200,1390 170,1378 170,1402 160,1402 165,1445 187,1478M160,1402L120,1358 92,1338H28L20,1360M20,1445L65,1438 105,1450 75,1450M965,1440L990,1478"],
  ["E", "M-2,590L10,617 -2,650M30,1297L55,1293 68,1325 65,1355 82,1357 90,1400 108,1405 125,1395 135,1425 142,1415 182,1445 175,1480 180,1500M312,1500L318,1425 330,1400 348,1430 360,1420 352,1390 370,1380 372,1365 398,1328 410,1340 430,1328 435,1345 448,1340 470,1370 475,1390 478,1370 497,1392 520,1362 545,1368 548,1358 570,1392 580,1382 612,1378 615,1352 585,1315 600,1305 600,1258 625,1252 605,1235 615,1220 603,1200 690,1178 700,1160 748,1145 752,1127 765,1117 785,1130 803,1125 810,1190 830,1182 838,1195 860,1197 855,1230 875,1228 920,1175 915,1190 945,1240 988,1380 1000,1352 1020,1382 1042,1382 1060,1370 1072,1400 1090,1420 1095,1445 1120,1435 1135,1465 1110,1500M1135,1465L1150,1450 1170,1450 1190,1420 1235,1378 1275,1393 1285,1425 1340,1435 1350,1420 1348,1360 1372,1308 1390,1325 1430,1345 1440,1390 1475,1415 1500,1397 1545,1408 1555,1440 1570,1460M1135,1465L1148,1500"],
  ["F", "M145,85L150,50 178,45 180,-5M312,-5L322,50 340,55 358,90 352,105 370,130M180,260L215,275 255,290 290,300 320,335 340,360 352,340M210,352L250,355 255,415 290,440 310,465M250,370L285,365 315,375 300,380 300,430 310,470 340,440 355,490M262,440L270,540M262,440L285,430M270,540L232,540 225,545 165,560 112,565 110,590 100,600M232,540L208,580 198,662 155,708 120,745 95,735 108,655M270,540L282,590 305,605 288,670 305,720 335,760 340,830 352,842M155,708L163,755 120,778 138,820 130,840 108,845 98,870 75,862 88,760M163,755L188,765 282,870 335,878 350,895M312,870L325,835 350,848M65,790L78,855M430,342L460,315 475,325 490,362 522,365 525,345 545,330 552,295 565,310 600,370 622,370 632,425 718,515 715,540M502,362V187L555,162 605,220 625,262 683,250 705,290 705,330 740,350 755,395 790,340 812,298 855,310 860,285 870,272 890,290 970,292 990,305 990,328 955,350M992,305L1000,282 990,195 1037,178 1033,155 1050,80 1090,98 1100,90 1100,35 1122,8 1120,-5M1145,-5L1155,20 1188,50 1208,95 1203,180 1262,192 1297,225 1318,297 1380,303 1400,298 1455,335 1480,337 1490,350 1535,312H1575M460,540L480,530 490,510 530,505 570,530 590,565 605,570 608,612 598,640 597,700 602,780 620,790 602,848 622,862 708,855 712,800 735,790 745,770 768,770 775,680 808,675 810,610 825,565 880,550 885,535 820,560 812,500 800,490 775,545 765,535 745,550 695,535 680,550 678,580 650,600 645,622 610,620M745,550L750,510 735,440 760,435 770,390 785,385M770,440L830,455 860,450 862,425 885,400 912,408 922,388M602,848L622,890 640,910 640,945 648,950 640,970 625,975 615,1027M880,740L875,790 860,810 842,870 825,915 795,925 775,960 790,985 788,998 800,1003 807,1055 758,1060 748,1080M980,795L1000,825 1015,830 1028,825 1050,870 1070,880 1110,910 1165,920M1005,835L988,885 1060,940 1080,940 1105,965 1148,980 1152,925M1165,960L1170,920 1190,905 1225,935 1230,958 1190,965ZM1155,970L1150,1030 1165,1060 1170,1155M1185,990L1190,1020 1240,1035 1213,1085 1225,1110M1155,970L1185,990M1340,900L1362,940 1362,1000 1345,1025 1345,1070 1380,1110 1385,1140 1405,1150 1400,1195 1415,1230 1415,1260M1330,950L1295,980 1285,1020 1275,1065 1260,1070 1250,1130M1405,1150L1425,1170 1425,1130 1470,1190 1470,1240M1345,1235L1340,1280 1360,1330M1440,1290L1470,1275M1415,1260L1450,1310M415,1060L437,1108 485,1117 495,1140 490,1190 420,1252 358,1270 325,1325 300,1308 247,1308 245,1338 235,1347M485,1117L495,1070 505,1030M422,1252L445,1338M110,1420L105,1480M110,1420H130L138,1405 150,1413 182,1412 220,1460 232,1485M152,1288L135,1320 120,1322 108,1385 110,1420M0,1143H60M1500,1340L1530,1330 1540,1380M1370,1420L1440,1405 1500,1420 1500,1370"],
];
const DASHED = [
  ["A", "M430,765L428,660 450,640 575,645 640,712M632,735L700,750 710,765 697,830 715,890 765,932 800,905 820,850 850,800M430,765L452,825 435,868M415,902L465,960 480,1010 475,1080 385,1160 403,1200M-5,965L100,1040 200,1080 280,1125 308,1132 318,1230 303,1255 330,1300 385,1328V1510M-5,1140L90,1030M850,800L850,870 885,920 865,945 885,970 870,1050 885,1090 880,1165 830,1150M790,1125L755,1170 775,1240 798,1300 860,1335 870,1280 885,1310 1088,1312V1340"],
  ["B", "M385,-10V50M137,340V460M222,345V470M355,350V430L320,470M380,280V330H540M55,637H340M300,573H500M115,637L113,800M205,640L218,790 215,800 325,812M-5,800H130M280,640L350,750M650,180L645,260M380,435H440L400,520 300,570M0,570H200"],
];
const DASH_DARK = [
  ["D", "M127,930H268"],
  ["F", "M860,470L885,500 885,540M900,570L915,600 945,615 980,600 995,620 970,660 975,740M860,650L855,700 880,730M860,650H925L950,670M840,600L860,635M60,1143L90,1105M80,1143H118M1235,925L1300,870 1340,890M1230,958L1265,957 1300,915 1330,925M505,990V1040M400,1000L400,1050"],
];

/* deterministic vegetation and relief flecks */
const rng = (seed) => () => {
  seed = (seed + 0x6d2b79f5) | 0;
  let t = Math.imul(seed ^ (seed >>> 15), 1 | seed);
  t = (t + Math.imul(t ^ (t >>> 7), 61 | t)) ^ t;
  return ((t ^ (t >>> 14)) >>> 0) / 4294967296;
};
const FLECKS = [
  ["A", [0, 1230, 1130, 1510], "#f1efe9", 130, 2.4],
  ["A", [0, 1230, 1130, 1510], "#bad6b6", 90, 5],
  ["A", [450, 900, 1000, 1300], "#a5cdff", 26, 2.6],
  ["A", [440, 940, 1000, 1330], "#eeede6", 80, 3.6],
  ["A", [640, 20, 950, 440], "#d2d0c9", 110, 2.6],
  ["A", [780, 440, 860, 640], "#cfcdc6", 26, 2.6],
  ["G", [140, 100, 290, 780], "#d6d4cd", 170, 2.6],
  ["G", [450, 540, 560, 830], "#d6d5d2", 60, 2.8],
  ["G", [650, 20, 1130, 380], "#e3e3e4", 110, 3],
  ["G", [1120, 350, 1440, 570], "#dedcd6", 60, 2.4],
  ["B", [-40, 100, 560, 860], "#f1efe6", 170, 2.4],
  ["B", [-40, 100, 560, 860], "#c1dfbc", 120, 3.6],
  ["B", [0, -20, 860, 160], "#f1efe6", 50, 2.4],
  ["B", [0, 1160, 800, 1490], "#eeeedb", 50, 2.4],
  ["C", [930, 0, 1350, 560], "#dcdad4", 190, 2.6],
  ["C", [690, 560, 930, 940], "#dcdad4", 90, 2.6],
  ["C", [690, 300, 1200, 940], "#cbe3bb", 60, 2.6],
  ["C", [1200, 100, 1568, 830], "#eaeede", 110, 2],
  ["C", [1200, 100, 1568, 830], "#a5cdff", 40, 1.5],
  ["C", [1150, 860, 1568, 1500], "#f1f0e8", 100, 2.2],
  ["C", [1150, 860, 1568, 1500], "#cbe3bb", 120, 3.2],
  ["C", [340, 900, 600, 1420], "#c3deb8", 50, 2.6],
  ["C", [220, 1120, 370, 1340], "#f1f0e8", 26, 2.2],
  ["C", [600, 1180, 1200, 1500], "#f1f0e8", 90, 2.2],
  ["C", [600, 1180, 1200, 1500], "#c9e2b9", 90, 3],
  ["D", [400, 0, 1568, 560], "#f1f0e8", 240, 2.2],
  ["D", [240, 200, 1568, 590], "#c3deb8", 260, 2.8],
  ["D", [240, 250, 650, 590], "#f6eed6", 60, 2.6],
  ["D", [710, 60, 980, 230], "#d3d2cf", 80, 2.2],
  ["D", [240, 560, 900, 780], "#bfdab0", 60, 2.4],
  ["D", [0, 800, 1568, 1380], "#f4ebcf", 60, 3.6],
  ["D", [0, 1380, 1568, 1500], "#cbe0b8", 110, 3.6],
  ["E", [0, 500, 600, 1180], "#e6edd8", 330, 2.6],
  ["E", [100, 560, 600, 1480], "#bedab9", 200, 3],
  ["E", [0, 60, 300, 900], "#a5cdff", 40, 1.7],
  ["E", [580, 380, 1180, 1000], "#f4f4f1", 300, 2.7],
  ["E", [580, 380, 1180, 1100], "#b9d6b6", 230, 3.6],
  ["E", [1000, 600, 1600, 1400], "#d3e5c3", 300, 3.4],
  ["E", [1150, 600, 1600, 1400], "#eaeede", 180, 2.4],
  ["E", [540, 1000, 1150, 1480], "#f4f3ee", 200, 2.4],
  ["E", [540, 1080, 1150, 1480], "#cde4be", 160, 3.4],
  ["E", [1180, 10, 1410, 540], "#d9d8d3", 220, 2.6],
  ["E", [560, 150, 740, 560], "#dad9d4", 70, 2.6],
  ["E", [1000, 1200, 1500, 1500], "#e2e0dc", 110, 2.8],
  ["E", [1400, 80, 1600, 800], "#c7e0bc", 70, 3],
  ["F", [0, 380, 420, 600], "#c9dfb8", 130, 3],
  ["F", [0, 0, 420, 400], "#f4f3ee", 110, 2.6],
  ["F", [170, 240, 360, 480], "#dddbd6", 70, 2.3],
  ["F", [400, 0, 1100, 260], "#efe9d2", 130, 4],
  ["F", [600, 240, 1000, 560], "#c5dfb6", 130, 3],
  ["F", [740, 430, 1010, 800], "#d2d1ce", 200, 2.5],
  ["F", [740, 430, 1010, 800], "#ecebe8", 90, 2.5],
  ["F", [560, 480, 860, 800], "#e3e0cc", 110, 3],
  ["F", [1000, 200, 1568, 640], "#e5e1c6", 150, 3.2],
  ["F", [1150, 560, 1600, 1050], "#c3dcb6", 190, 3],
  ["F", [1150, 560, 1600, 1050], "#f0ede2", 110, 2.6],
  ["F", [1300, 780, 1500, 1200], "#d8d5cd", 120, 2.5],
  ["F", [970, 780, 1180, 1000], "#d8d5cd", 60, 2.4],
  ["F", [1150, 980, 1600, 1480], "#b3d3ab", 130, 3],
  ["F", [1150, 980, 1600, 1480], "#eceedd", 110, 2.4],
  ["F", [830, 950, 1200, 1480], "#eceedd", 120, 2.4],
  ["F", [830, 1000, 1200, 1480], "#c5dfb6", 90, 2.8],
  ["F", [250, 540, 640, 1020], "#ebe2c4", 100, 2.8],
  ["F", [90, 880, 560, 1400], "#f3e9cb", 100, 3.2],
];
const fleckPaths = FLECKS.map(([k, [x0, y0, x1, y1], fill, n, size], i) => {
  const [ox, oy, a, b] = SHEETS[k];
  const r = rng(i * 977 + 13);
  let d = "";
  for (let j = 0; j < n; j++) {
    const x = ox + a * (x0 + (x1 - x0) * (r() * 0.7 + r() * 0.3));
    const y = oy + b * (y0 + (y1 - y0) * (r() * 0.7 + r() * 0.3));
    const s = size * (0.35 + r() * 1.1);
    const w = 0.4 + r();
    const lean = (r() - 0.5) * 2;
    const p = (u, v) => `${(x + u * s).toFixed(1)},${(y + v * s).toFixed(1)}`;
    d += `M${p(-w * 0.6, -0.5)}L${p(lean * 0.4, -1)} ${p(w, lean * 0.3)} ${p(lean, 1.1)}Z`;
  }
  return { d, fill };
});

const LABELS = {
  country: "Greenland,357.5,454.5;Iceland,573,471;Sweden,849,480.5;Finland,923,523.5;Norway,790,538;United,713.5,623.5;Kingdom,713.5,637;Ireland,643.5,654.5;Poland,864,657;Belarus,937,642;Ukraine,963,697;Germany,791,672.5;France,737.5,733;Romania,913,742;Italy,813.5,770;Spain,695,792;Portugal,650.5,822;Greece,894,809.5;Turkey,995,814.5;Kazakhstan,1243.5,715;Mongolia,1523,730.5;Uzbekistan,1217.5,783.5;Turkmenistan,1179.5,814.5;China,1528,844;Russia,1451,520.5;Afghanistan,1226,864.5;Pakistan,1260,900;Iran,1142,880;Iraq,1054,871.5;Morocco,668.5,882.5;Algeria,738.5,916;Libya,855,925.5;Egypt,948.5,925.5;Saudi Arabia,1072,956;India,1340,961;Myanmar,1472,967;(Burma),1472,981;Mauritania,630,994.5;Mali,705,1004;Niger,792,1007;Chad,864.5,1027;Sudan,955.5,1016;Yemen,1089.5,1020.5;Thailand,1507,1015",
  small: "Denmark,797,615;Austria,829,714.5;Tunisia,793,861.5;Syria,1021,850;Nepal,1374,915.5;Oman,1157,981.5;Kyrgyzstan,1300.5,789;Western,615,940.5;Sahara,615,952;Cuba,101,972;Puerto Rico,199,986;Guatemala,13,1019.5;Nicaragua,65,1046;Burkina,704,1042;Vietnam,1566,1046",
  state: "ON,41,674;QC,146.5,677;NL,240.5,643.5;NB,202,730;PE,229,737.5;NS,222.5,754;ME,178.5,751;NH,158,764.5;MA,162,780;MI,57,764;WI,20,754;NY,129,773;IL,19,794;IN,45.5,802;OH,71.5,798;PA,111,795;MD,111,807.5;DE,129.5,814.5;WV,86,820;VA,112.5,830;NC,102.5,847;TN,42,847;SC,89.5,867;MS,17.5,869.5;AL,42,875;GA,69,882;LA,1,896;FL,82.5,919.5;MO,-6,821;AR,-5,850",
  water: "Northwestern,94,440;Passages,94.5,453.5;Hudson Bay,52.5,560.5;Norwegian Sea,742.5,394;Gulf of,15,935;Mexico,15,947.5;Caribbean Sea,132,1031;Gulf of Aden,1092,1046;Arabian Sea,1216,1050;Bay of Bengal,1402,1039",
  ocean: "North,401.5,838;Atlantic,401,856;Ocean,401,873.5",
};
const labelList = Object.entries(LABELS).flatMap(([kind, s]) =>
  s.split(";").map((e) => {
    const [text, x, y] = e.split(",");
    return { kind, text, x: +x, y: +y + (kind === "country" ? 5 : kind === "ocean" ? 5 : 4.3) };
  })
);

const PINS = [
  [48.4, 1142.3], [141.7, 1114], [203.6, 1159], [85.6, 1259],
  [1250.6, 823], [1101.6, 965], [1044.5, 981], [1072.5, 1028], [1143.5, 1008],
  [1210.5, 1007], [1240.4, 1040], [1262.6, 1051], [1392.6, 1000], [1473.3, 899], [1003.3, 1164],
  [1375.9, 1154, "off"], [1420.3, 1171, "off"], [1924.9, 1326.7, "off"],
  [2249, 1423, "custom"], [2188, 1509.5, "custom"],
];
const PIN_COLORS = {
  on: ["#062b3f", "#ffdd2d", "#062b3f"],
  off: ["#a8a8a8", "#e9e9e9", "#a8a8a8"],
  custom: ["#3d3d3d", "#ffffff", "#3d3d3d"],
};

function Pin({ x, y, kind = "on" }) {
  const [body, ring, hole] = PIN_COLORS[kind];
  return (
    <PinSvg $x={x} $y={y} width="54" height="65" viewBox="0 0 54 65">
      <path fill={body} d="M27,1C12.6,1 1.3,12.2 1.3,26.5C1.3,34 5,40.5 9.5,46C15,52.5 23,58.5 27,64C31,58.5 39,52.5 44.5,46C49,40.5 52.7,34 52.7,26.5C52.7,12.2 41.4,1 27,1Z" />
      <circle cx="27" cy="27.5" r="16" fill={ring} />
      <circle cx="27" cy="27.5" r="7" fill={hole} />
    </PinSvg>
  );
}

function WorldMap() {
  return (
    <MapSvg viewBox="0 372.1 1568 672.8" preserveAspectRatio="none">
      <defs>
        <clipPath id="land">
          {LAND.map(([k, d], i) => <path key={i} d={d} transform={place(k)} />)}
        </clipPath>
        <filter id="coast" filterUnits="userSpaceOnUse" x="-20" y="360" width="1620" height="710">
          <feTurbulence type="fractalNoise" baseFrequency="0.09" numOctaves="4" seed="7" />
          <feDisplacementMap in="SourceGraphic" scale="11" xChannelSelector="R" yChannelSelector="G" />
        </filter>
      </defs>
      <g filter="url(#coast)">
        <g clipPath="url(#land)">
          {AREAS.map(([k, fill, d], i) => <path key={i} d={d} fill={fill} transform={place(k)} />)}
          {fleckPaths.map((f, i) => <path key={i} d={f.d} fill={f.fill} />)}
        </g>
        <g fill="#a5cdff">
          {WATER.map(([k, d], i) => <path key={i} d={d} transform={place(k)} />)}
        </g>
        <path fill="#dbe8c8" transform={place("F")} d="M25,635L60,622 50,650 30,655ZM30,165L60,140 105,180 60,205ZM395,1000L412,1005 410,1050 398,1040Z" />
        <g fill="none" stroke="#a5cdff" strokeWidth="2">
          {RIVERS.map(([k, d], i) => <path key={i} d={d} transform={place(k)} vectorEffect="non-scaling-stroke" />)}
        </g>
      </g>
      <g fill="none" stroke="#a3a8a3" strokeWidth="1.3" strokeDasharray="18 5">
        {DASHED.map(([k, d], i) => <path key={i} d={d} transform={place(k)} vectorEffect="non-scaling-stroke" />)}
      </g>
      <g fill="none" stroke="#6f6f6f" strokeWidth="2" strokeLinejoin="round">
        {BORDERS.map(([k, d], i) => <path key={i} d={d} transform={place(k)} vectorEffect="non-scaling-stroke" />)}
      </g>
      <g fill="none" stroke="#6f6f6f" strokeWidth="2" strokeDasharray="8 5">
        {DASH_DARK.map(([k, d], i) => <path key={i} d={d} transform={place(k)} vectorEffect="non-scaling-stroke" />)}
      </g>
      {labelList.map((l) => (
        <MapText key={l.text} $kind={l.kind} x={l.x} y={l.y}>{l.text}</MapText>
      ))}
    </MapSvg>
  );
}

const TABS = [
  ["Overview", 198], ["Cnames & SSL", 265], ["Other Settings", 263], ["Datacenters", 232],
  ["Purge", 151], ["Prefetch", 185], ["Integration", 213],
];
const REGIONS = [
  { name: "USA & Canada", on: true, price: "$49 / TB", places: ["Atlanta", "Chicago", "Dallas", "Los Angeles", "New York", "Toronto"] },
  { name: "Europe", on: true, price: "$49 / TB", places: ["Amsterdam", "Bratislava", "Budapest", "Frankfurt", "Kiev", "London", "Madrid", "Moscow", ""] },
  { name: "Asia & Australia", price: "$125 / TB", places: ["Ankara", "Delhi", "Hong Kong", "Istanbul", "Seoul", "Singapore", "Tokyo", "Bangkok", ""] },
  { name: "South America", price: "$185 / TB", places: ["Buenos Aires", "Sao Paulo"] },
];

const Check = ({ on }) => (
  <Box>
    {on && (
      <svg width="30" height="26" viewBox="0 0 30 26">
        <path d="M4.200,10.200Q6,9 7.500,11L12,16.500L23.500,3.500Q25.500,2 27,3.200Q29.500,5 28,7.500L13.500,24Q12,26 10.500,24L2,15.500Q0.500,12.500 4.200,10.200Z" fill="#061a26" />
      </svg>
    )}
  </Box>
);

const StepCheck = () => (
  <svg width="72" height="71" viewBox="2 2 72 71">
    <path d="M22,34L32,44L57,20L64,27L32,56.500L14,40Z" fill="#fff" stroke="#fff" strokeWidth="4" strokeLinejoin="round" />
  </svg>
);

export default function App() {
  return (
    <Page>
      <Global />
      <Welcome>
        <Title>Welcome to CDN77 Client</Title>
        <Lead>
          <b>You are ready for an upgrade.</b> 5 days left for your trial. You have transferred 588.7 MB out of 100 GB in your trial.
        </Lead>
        <Collapse width="22" height="15" viewBox="0 0 22 15">
          <path d="M1.5,13.5L11,3.500L20.5,13.5" fill="none" stroke="#061a26" strokeWidth="3" />
        </Collapse>
        <Steps>
          <Step><StepDisc><StepCheck /></StepDisc><StepText>Create CDN</StepText><StepLine $from={197} $top={56} /></Step>
          <Step><StepDisc><StepCheck /></StepDisc><StepText>Set up CDN</StepText><StepLine $from={194} $top={56} /></Step>
          <Step><StepDisc><StepCheck /></StepDisc><StepText>View reports</StepText><StepLine $from={200} $top={46} /></Step>
          <Step $active><StepDisc $active>4</StepDisc><StepText $active>Upgrade and retrieve bonus</StepText></Step>
        </Steps>
      </Welcome>
      <Bar>
        <Picker>vidc<Caret /></Picker>
        {TABS.map(([name, w]) => (
          <Tab key={name} $w={w} $active={name === "Datacenters"}>{name}</Tab>
        ))}
        <Tab $w={85} $end>Delete</Tab>
      </Bar>
      <MapPanel>
        <WorldMap />
        {PINS.map(([x, y, kind], i) => <Pin key={i} x={x} y={y} kind={kind} />)}
        <Zoom>
          <ZoomButton><svg width="22" height="22"><path d="M8,0h6v8h8v6h-8v8h-6v-8h-8v-6h8z" fill="#666" /></svg></ZoomButton>
          <ZoomButton><svg width="22" height="6"><path d="M0,0h22v6h-22z" fill="#666" /></svg></ZoomButton>
        </Zoom>
        <Credits>
          <Credit>Map data ©2016 Google, INEGI</Credit>
          <Credit $last>Terms of Use</Credit>
        </Credits>
      </MapPanel>
      <Regions>
        {REGIONS.map((r, i) => (
          <Region key={r.name} $first={i === 0}>
            <Row><Check on={r.on} /><Place $head>{r.name}</Place></Row>
            {r.places.map((p) => (
              <Row key={p}>
                <Check on={r.on && p} />
                <Place $dim={p === "Bangkok"}>{p}</Place>
                {p && <Price $tight={r.price.length > 8 && p !== "Bangkok"}>{p === "Bangkok" ? "custom" : r.price}</Price>}
              </Row>
            ))}
          </Region>
        ))}
      </Regions>
    </Page>
  );
}
